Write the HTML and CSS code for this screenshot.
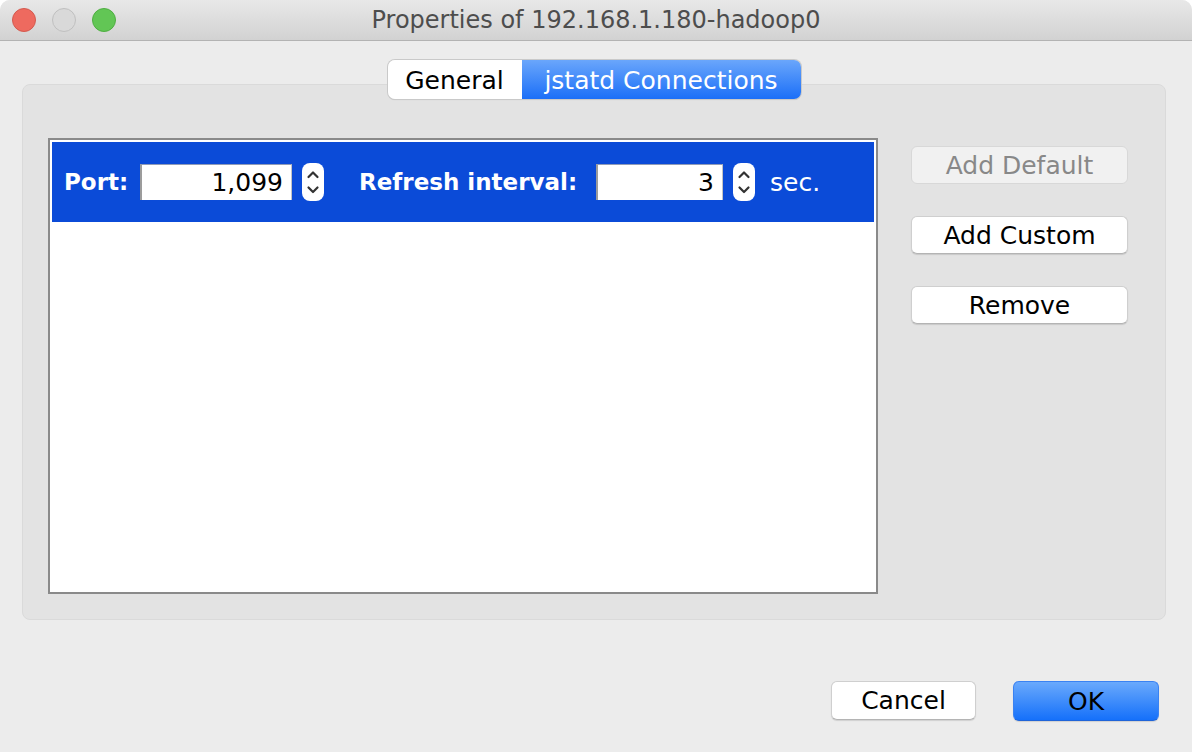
FILE: index.html
```html
<!DOCTYPE html>
<html>
<head>
<meta charset="utf-8">
<title>Properties of 192.168.1.180-hadoop0</title>
<link rel="stylesheet" href="styles.css">
</head>
<body>
<div class="window">
  <div class="titlebar">
    <div class="lights">
      <span class="light red"></span>
      <span class="light gray"></span>
      <span class="light green"></span>
    </div>
    <div class="title">Properties of 192.168.1.180-hadoop0</div>
  </div>
  <div class="main">
    <div class="tabs">
      <div class="tab tab-general">General</div>
      <div class="tab tab-active">jstatd Connections</div>
    </div>
    <div class="panel">
      <div class="list">
        <div class="row">
          <span class="label label-port">Port:</span>
          <div class="field field-port">1,099</div>
          <svg class="spinner" width="22" height="38" viewBox="0 0 22 38">
            <rect x="0" y="0" width="22" height="38" rx="8" ry="8" fill="#fff"/>
            <path d="M6.5 14 L11 9.5 L15.5 14" fill="none" stroke="#333" stroke-width="2.2" stroke-linecap="round" stroke-linejoin="round"/>
            <path d="M6.5 24.5 L11 29 L15.5 24.5" fill="none" stroke="#333" stroke-width="2.2" stroke-linecap="round" stroke-linejoin="round"/>
          </svg>
          <span class="label label-refresh">Refresh interval:</span>
          <div class="field field-refresh">3</div>
          <svg class="spinner" width="22" height="38" viewBox="0 0 22 38">
            <rect x="0" y="0" width="22" height="38" rx="8" ry="8" fill="#fff"/>
            <path d="M6.5 14 L11 9.5 L15.5 14" fill="none" stroke="#333" stroke-width="2.2" stroke-linecap="round" stroke-linejoin="round"/>
            <path d="M6.5 24.5 L11 29 L15.5 24.5" fill="none" stroke="#333" stroke-width="2.2" stroke-linecap="round" stroke-linejoin="round"/>
          </svg>
          <span class="unit">sec.</span>
        </div>
      </div>
      <div class="side">
        <div class="btn btn-disabled">Add Default</div>
        <div class="btn">Add Custom</div>
        <div class="btn">Remove</div>
      </div>
    </div>
    <div class="footer">
      <div class="btn btn-cancel">Cancel</div>
      <div class="btn btn-ok">OK</div>
    </div>
  </div>
</div>
</body>
</html>
```

FILE: styles.css
```css
html, body {
  margin: 0;
  padding: 0;
  background: #ffffff;
}
body {
  width: 1194px;
  height: 752px;
  overflow: hidden;
  font-family: "DejaVu Sans", "Liberation Sans", sans-serif;
  font-size: 25px;
  color: #000;
}
.window {
  width: 1192px;
  height: 752px;
  background: #ececec;
  border-radius: 10px 10px 0 0;
  overflow: hidden;
  display: flex;
  flex-direction: column;
}
.titlebar {
  height: 40px;
  flex: none;
  border-bottom: 1px solid #b3b3b3;
  background: linear-gradient(#e8e8e8, #d2d2d2);
  display: flex;
  align-items: center;
  position: relative;
}
.lights {
  display: flex;
  gap: 16px;
  padding-left: 12px;
  z-index: 1;
}
.light {
  width: 22px;
  height: 22px;
  border-radius: 50%;
  border: 1px solid;
}
.light.red {
  background: #ee6a5f;
  border-color: #d35a4f;
}
.light.gray {
  background: #d9d9d9;
  border-color: #bfbfbf;
}
.light.green {
  background: #62c655;
  border-color: #4fae42;
}
.title {
  position: absolute;
  left: 0;
  right: 0;
  text-align: center;
  color: #4d4d4d;
  font-size: 24px;
  line-height: 42px;
}
.main {
  flex: 1;
  display: flex;
  flex-direction: column;
  padding: 19px 26px 0 22px;
}
.tabs {
  display: flex;
  align-self: center;
  height: 39px;
  position: relative;
  z-index: 2;
  border-radius: 7px;
  box-shadow: 0 0 0 1px #c9c9c9, 0 1px 1px rgba(0,0,0,0.15);
  overflow: hidden;
}
.tab {
  display: flex;
  align-items: center;
  justify-content: center;
  height: 39px;
  box-sizing: border-box;
  padding-top: 2px;
}
.tab-general {
  width: 134px;
  background: #fff;
  color: #000;
}
.tab-active {
  width: 279px;
  background: linear-gradient(#6aa6fb, #1b6ff8);
  color: #fff;
}
.panel {
  margin-top: -15px;
  height: 536px;
  box-sizing: border-box;
  background: #e3e3e3;
  border: 1px solid #dadada;
  border-radius: 8px;
  display: flex;
  padding: 53px 36px 0 25px;
}
.list {
  width: 830px;
  height: 456px;
  box-sizing: border-box;
  border: 2px solid #8a8a8a;
  background: #fff;
  padding: 2px;
  flex: none;
}
.row {
  height: 80px;
  background: #0b4bd8;
  display: flex;
  align-items: center;
  padding-left: 12px;
  color: #fff;
}
.label {
  font-weight: bold;
  font-size: 23px;
  white-space: nowrap;
}
.label-port {
  width: 76px;
}
.label-refresh {
  margin-left: 35px;
  width: 237px;
}
.field {
  height: 36px;
  box-sizing: border-box;
  background: #fff;
  color: #000;
  border-top: 1px solid #8f9bb8;
  border-left: 2px solid #9c9c9c;
  border-right: 1px solid #c4c4c4;
  text-align: right;
  padding-right: 8px;
  line-height: 36px;
}
.field-port {
  width: 152px;
}
.field-refresh {
  width: 127px;
}
.spinner {
  margin-left: 10px;
  flex: none;
}
.unit {
  margin-left: 15px;
}
.side {
  margin-left: 33px;
  padding-top: 8px;
  display: flex;
  flex-direction: column;
  gap: 32px;
}
.btn {
  width: 217px;
  height: 38px;
  box-sizing: border-box;
  background: #fff;
  border: 1px solid #cfcfcf;
  border-bottom-color: #b4b4b4;
  border-radius: 6px;
  box-shadow: 0 1px 1px rgba(0,0,0,0.12);
  display: flex;
  align-items: center;
  justify-content: center;
  color: #000;
}
.btn-disabled {
  background: #f1f1f1;
  color: #888;
  border-color: #d8d8d8;
  box-shadow: none;
}
.footer {
  display: flex;
  justify-content: flex-end;
  gap: 37px;
  margin-top: 61px;
  padding-right: 7px;
}
.btn-cancel {
  width: 145px;
  height: 39px;
}
.btn-ok {
  width: 146px;
  height: 40px;
  background: linear-gradient(#6aa9fc, #1570fa);
  border-color: #3a82f2;
  border-bottom-color: #1f64d8;
}
```
